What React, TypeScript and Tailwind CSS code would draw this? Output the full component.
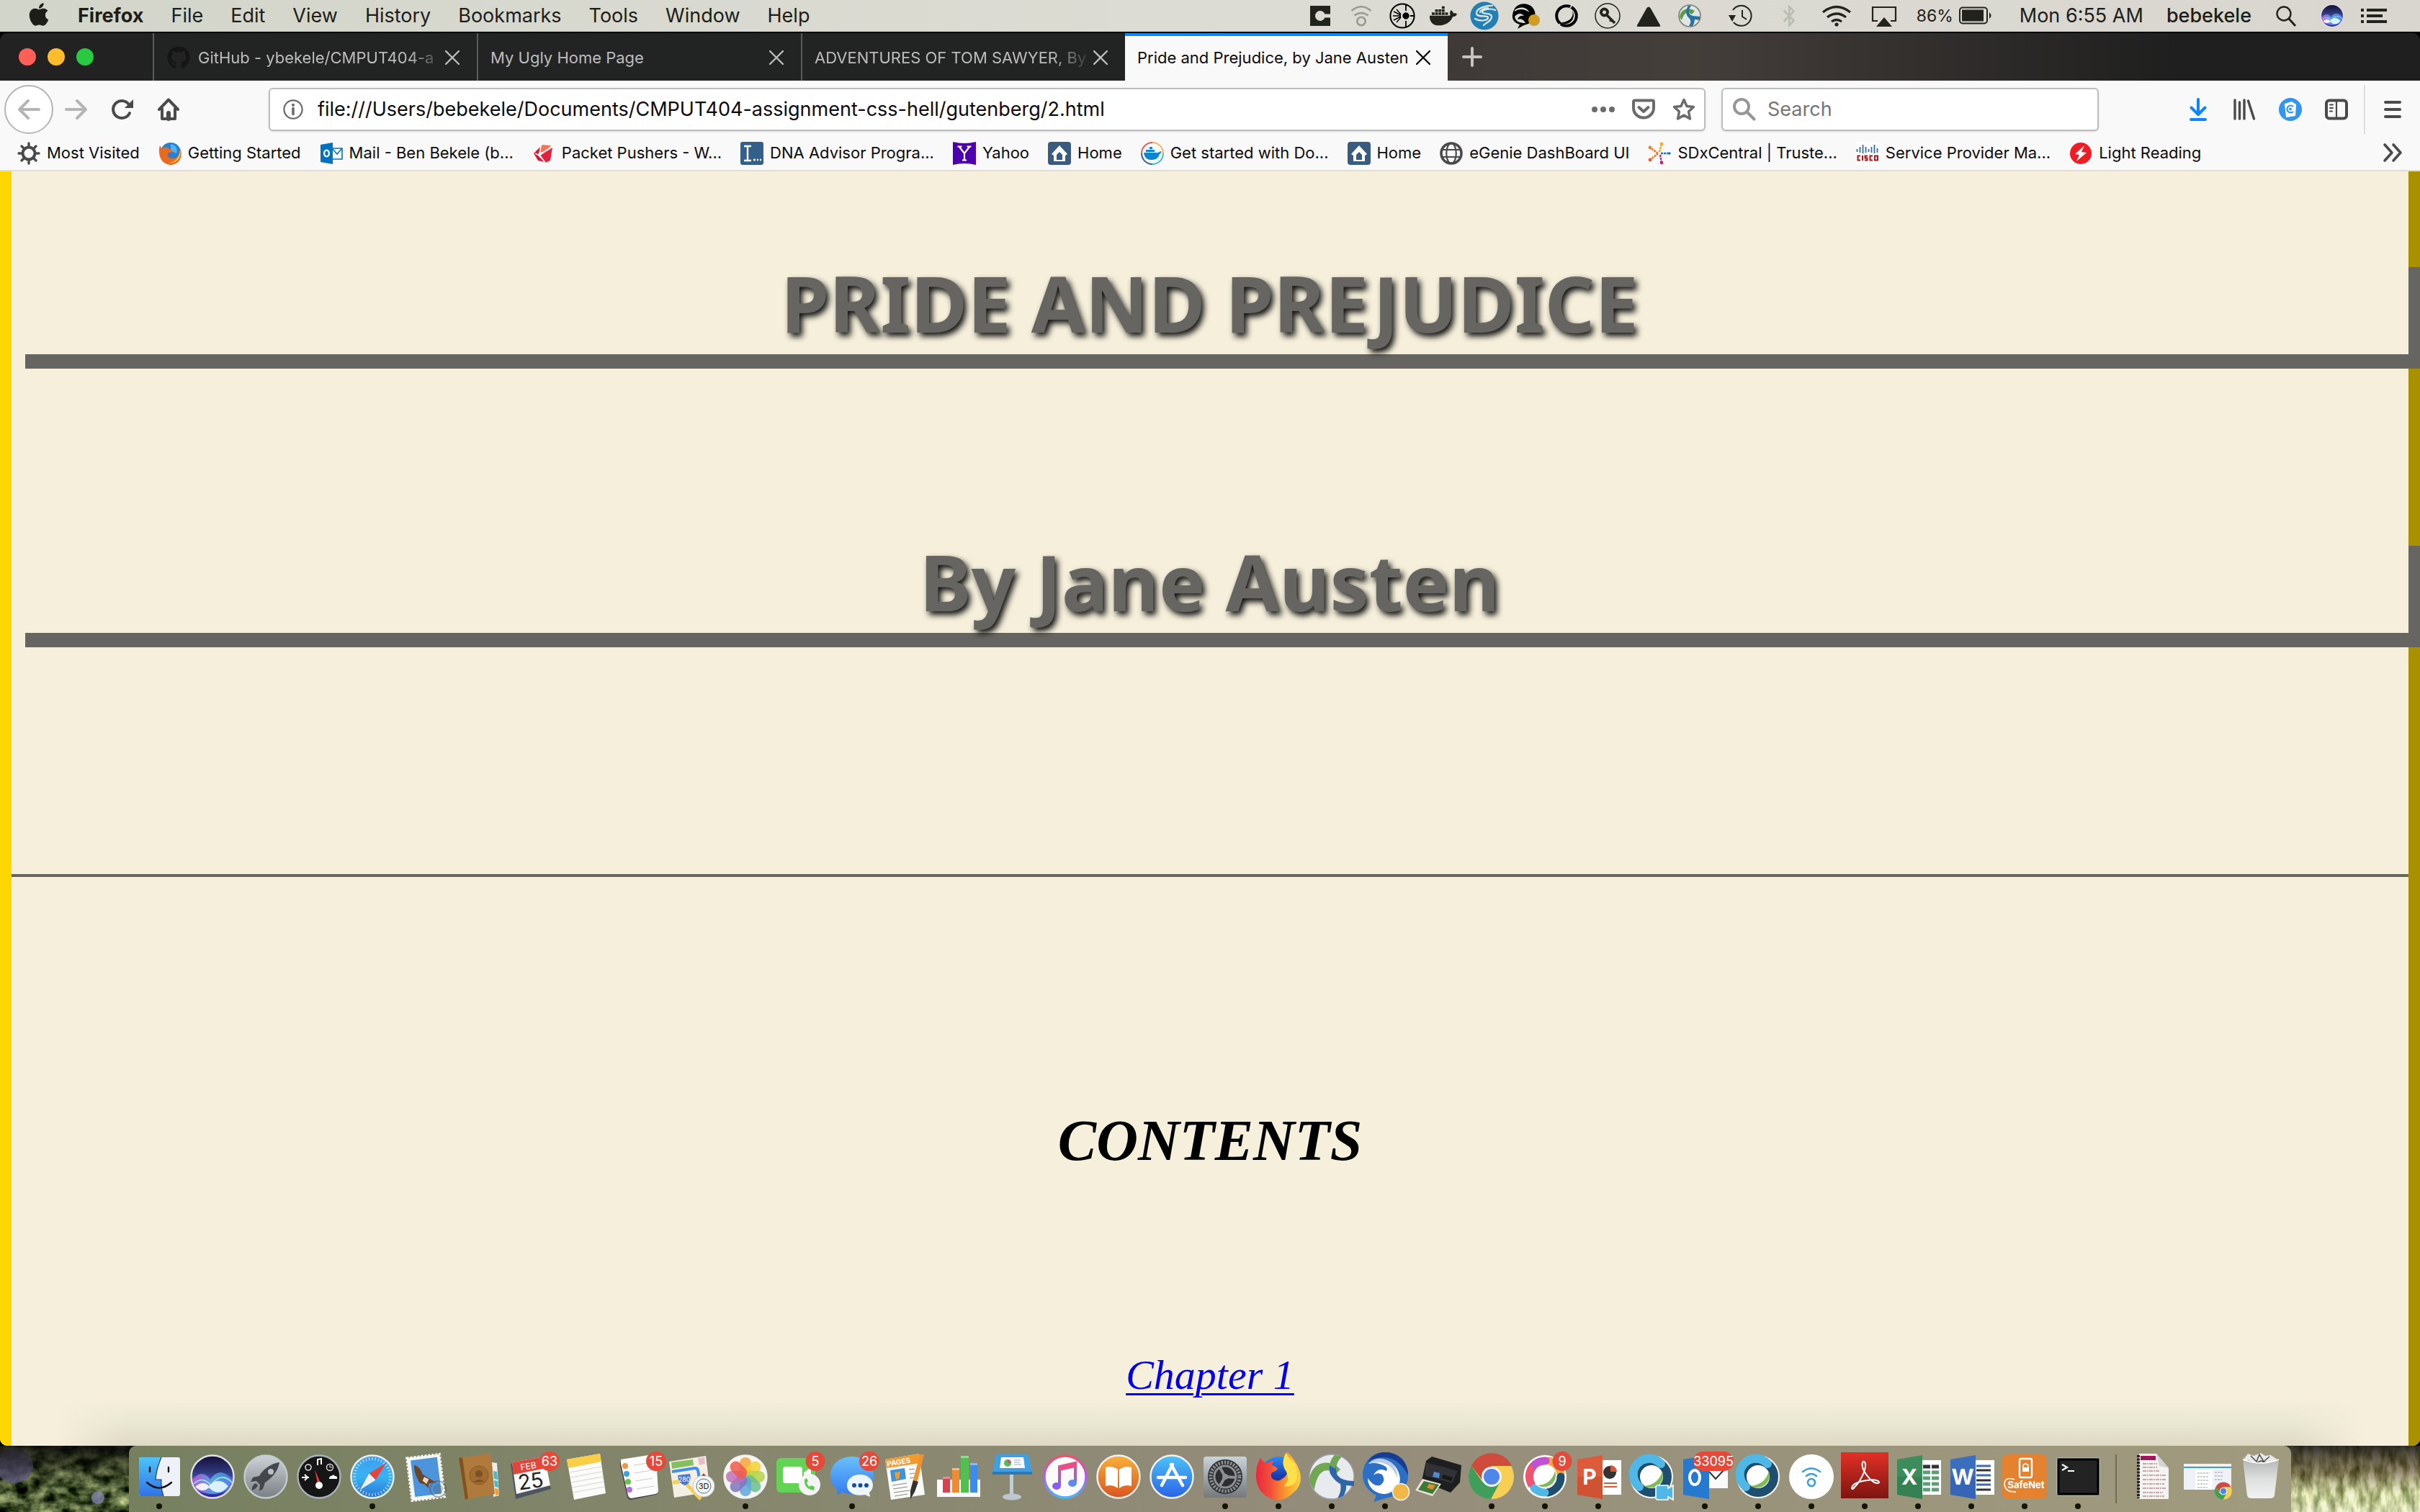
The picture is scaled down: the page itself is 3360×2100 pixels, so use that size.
import React from "react";
import type { ReactNode } from "react";
import { FaApple, FaBluetoothB, FaDocker, FaGithub } from "react-icons/fa";

const ui = "font-['Inter','Liberation_Sans',sans-serif]";

/* ---------- Menu bar ---------- */

const menus = ["File", "Edit", "View", "History", "Bookmarks", "Tools", "Window", "Help"];

function Glyph({ children, size = 40 }: { children: ReactNode; size?: number }) {
  return (
    <svg viewBox="0 0 40 40" width={size} height={size} fill="none" aria-hidden="true">
      {children}
    </svg>
  );
}

const ink = "#22231c";

const statusA: { name: string; art: ReactNode }[] = [
  { name: "Crashplan", art: <path d="M6 6h28v11.500H26.500a7 7 0 1 0 0 5H34V34H6z" fill={ink} /> },
  {
    name: "Hotspot",
    art: (
      <g stroke="#99998f" strokeWidth="2.600">
        <circle cx="20" cy="27.500" r="5.700" />
        <path d="M10.500 19.500q9.500-7 19 0M6.500 13q13.500-11.500 27 0" />
      </g>
    ),
  },
  {
    name: "Network scanner",
    art: (
      <g stroke="#000">
        <circle cx="20" cy="20" r="16.600" strokeWidth="2" />
        <circle cx="25" cy="20" r="4.200" fill="#000" />
        <path d="M25 4v9M25 27v9M31 20h5" strokeWidth="1.800" />
        <path d="M7 20h11M8 14l10 5M8 26l10-5M12 11l6 7M12 29l6-7" strokeWidth="1.400" />
      </g>
    ),
  },
  { name: "Docker", art: <FaDocker x={1} y={1} size={38} color={ink} /> },
  {
    name: "Sync",
    art: (
      <g>
        <circle cx="20" cy="20" r="19.600" fill="#247fb4" />
        <path d="M31 6C22 5 8 10 9 17c1 6 17 1 16 6-1 4-12 5-18 1M35 12c-7-3-18-1-18 3 0 3 14 0 13 7-1 6-9 8-11 11M25 9c-5 0-11 3-11 6" stroke="#e4e8e4" strokeWidth="2.200" strokeLinecap="round" />
      </g>
    ),
  },
  {
    name: "Jabber",
    art: (
      <g>
        <path d="M4 12C8 1 28-1 33 14c2 8-4 14-9 17l-6 2-9 5 3-6C1 29 0 20 4 12z" fill="#000" />
        <path d="M5 12c7-6 18-4 20 3-6-5-15-5-20-1zM5 21c4-5 10-5 13-1-4-1-8 1-9 5 5-2 8 0 11 5-8 0-14-2-15-9z" fill="#d9dad0" />
        <circle cx="32" cy="26" r="8" fill="#cf9c25" />
      </g>
    ),
  },
  {
    name: "Assistant",
    art: (
      <g>
        <circle cx="20" cy="20" r="13.800" stroke="#000" strokeWidth="4" />
        <path d="m25 9 4-6M11 31l-4 6" stroke="#dcdcd3" strokeWidth="1.800" />
        <path d="M28 12c3 9-4 17-15 17 8 7 22-4 15-17z" fill="#000" />
      </g>
    ),
  },
  {
    name: "Keychain",
    art: (
      <g stroke={ink}>
        <circle cx="20" cy="20" r="17" strokeWidth="1.500" />
        <circle cx="15.500" cy="15" r="4.500" strokeWidth="4" />
        <path d="m19 19 11 11M25 25l-1 3" strokeWidth="3.600" />
      </g>
    ),
  },
  { name: "Drive", art: <path d="M17.500 9q2.500-3 5 0L36 33q1 2-1.500 2h-29Q3 35 4 33z" fill={ink} /> },
  {
    name: "AnyConnect",
    art: (
      <g>
        <circle cx="20" cy="20" r="15" fill="#dfe6e4" stroke="#767b74" strokeWidth="1.500" />
        <path d="M6 22C7 11 18 7 27 13l-4 5c-5-5-11-3-14 8z" fill="#5d9b45" />
        <path d="M22 6c-5 6-4 12 2 14l10 1v5l-7-1q0 5-3 9h-5q4-6 1-10c-6-5-6-12-2-18z" fill="#2671a5" />
      </g>
    ),
  },
];

const statusB: { name: string; art: ReactNode }[] = [
  {
    name: "Time Machine",
    art: (
      <g stroke={ink} strokeWidth="2">
        <path d="M8 12a14 14 0 1 1 1 17" />
        <path d="M21 12v9l6 4" />
        <path d="m2 19 5 9 5-9z" fill={ink} stroke="none" />
      </g>
    ),
  },
  { name: "Bluetooth", art: <FaBluetoothB x={4} y={4} size={32} color="#babbb1" /> },
  {
    name: "Wi-Fi",
    art: (
      <g stroke={ink} strokeWidth="3.200">
        <path d="M1 15q19-15 38 0M7 22q13-10 26 0M13 28q7-5 14 0" />
        <circle cx="20" cy="32" r="2.600" fill={ink} stroke="none" />
      </g>
    ),
  },
  {
    name: "AirPlay",
    art: (
      <g>
        <path d="M11 27H4V8h32v19h-7" stroke={ink} strokeWidth="2.200" />
        <path d="m20 22 11 13H9z" fill={ink} />
      </g>
    ),
  },
];

function MenuBar() {
  return (
    <header className="flex h-11 shrink-0 items-center bg-linear-to-r from-[#d2d5ca] via-[#dddcd4] to-[#d8d6cf] text-[27px] text-[#1d1e19]">
      <button aria-label="Apple menu" className="ml-9 mr-9 -mt-1">
        <FaApple size={36} />
      </button>
      <nav className="flex flex-1 items-center gap-[38px]">
        <button className="font-bold">Firefox</button>
        {menus.map((m) => (
          <button key={m}>{m}</button>
        ))}
      </nav>
      <div className="flex items-center">
        {statusA.map((s) => (
          <button key={s.name} aria-label={s.name} className="flex w-[57px] justify-center">
            <Glyph>{s.art}</Glyph>
          </button>
        ))}
      </div>
      <div className="ml-2.5 flex items-center">
        {statusB.map((s) => (
          <button key={s.name} aria-label={s.name} className="flex w-[66px] justify-center">
            <Glyph>{s.art}</Glyph>
          </button>
        ))}
      </div>
      <div className="ml-3 flex items-center gap-2 text-[23px]">
        86%
        <svg width="48" height="26" viewBox="0 0 48 26" fill="none" aria-hidden="true">
          <rect x="1" y="1.500" width="38" height="22" rx="4" stroke={ink} strokeWidth="2" />
          <rect x="4" y="4.500" width="30" height="16" fill={ink} />
          <path d="M42 8q5 4.500 0 9z" fill={ink} />
        </svg>
      </div>
      <button className="ml-9">Mon 6:55 AM</button>
      <button className="ml-8 font-medium">bebekele</button>
      <button aria-label="Spotlight" className="ml-7">
        <Glyph>
          <circle cx="17" cy="17" r="9.500" stroke={ink} strokeWidth="2.400" />
          <path d="m24 24 9 10" stroke={ink} strokeWidth="3" />
        </Glyph>
      </button>
      <button aria-label="Siri" className="ml-6">
        <svg viewBox="-34 -34 68 68" width="40" height="36" aria-hidden="true">
          <SiriArt />
        </svg>
      </button>
      <button aria-label="Notification Center" className="ml-5 mr-[46px]">
        <svg width="36" height="40" viewBox="0 0 36 40" fill={ink} aria-hidden="true">
          <path d="M0 10h4v4H0zM0 18h4v4H0zM0 26h4v4H0zM8 10h28v4H8zM8 18h22v4H8zM8 26h28v4H8z" />
        </svg>
      </button>
    </header>
  );
}

/* ---------- Tab strip ---------- */

const tabs = [
  { title: "GitHub - ybekele/CMPUT404-a", icon: true, active: false, fade: true },
  { title: "My Ugly Home Page", icon: false, active: false, fade: false },
  { title: "ADVENTURES OF TOM SAWYER, By", icon: false, active: false, fade: true },
  { title: "Pride and Prejudice, by Jane Austen", icon: false, active: true, fade: false },
];

function TabStrip() {
  return (
    <div className="shrink-0 bg-black pt-0.5">
      <div className="flex h-[66px] items-stretch rounded-t-[10px] bg-linear-to-r from-[#222] from-0% via-[#443e3b] via-70% to-[#1f1f1f] to-90%">
        <div className="flex w-[212px] shrink-0 items-center gap-4 rounded-tl-[10px] bg-[#222] pl-[26px]">
          <button aria-label="Close window" className="size-6 rounded-full bg-[#ff5f57]" />
          <button aria-label="Minimize window" className="size-6 rounded-full bg-[#ffbd2e]" />
          <button aria-label="Zoom window" className="size-6 rounded-full bg-[#28ca41]" />
        </div>
        {tabs.map((t) => (
          <div
            key={t.title}
            className={
              t.active
                ? "flex w-[448px] items-center border-t-4 border-[#0a84ff] bg-[#f9f9fa] pb-0.5 text-[#0c0c0d]"
                : "flex w-[450px] items-center border-l-2 border-[#5a5a5a] bg-[#222323] pt-0.5 text-[#bdbdbd]"
            }
          >
            {t.icon && <FaGithub size={32} className="ml-[18px] -mr-1.5 shrink-0 text-[#151515]" />}
            <button
              className={
                t.fade
                  ? "ml-[17px] flex-1 mask-r-from-85% text-left text-[22px] whitespace-nowrap"
                  : "ml-[17px] flex-1 text-left text-[22px] whitespace-nowrap"
              }
            >
              {t.title}
            </button>
            <button aria-label={"Close " + t.title} className="mr-6 shrink-0">
              <svg width="20" height="20" viewBox="0 0 20 20" stroke="currentColor" strokeWidth="2.400" strokeLinecap="round" aria-hidden="true">
                <path d="m1 1 18 18M19 1 1 19" />
              </svg>
            </button>
          </div>
        ))}
        <button aria-label="New tab" className="ml-5 text-[#c4c4c4]">
          <svg width="28" height="28" viewBox="0 0 28 28" stroke="currentColor" strokeWidth="4" strokeLinecap="round" aria-hidden="true">
            <path d="M14 2v24M2 14h24" />
          </svg>
        </button>
      </div>
    </div>
  );
}

/* ---------- Navigation toolbar ---------- */

function Icon32({ children, color = "#4a4a4b" }: { children: ReactNode; color?: string }) {
  return (
    <svg width="32" height="32" viewBox="0 0 32 32" fill="none" stroke={color} strokeWidth="4" strokeLinecap="round" strokeLinejoin="round" aria-hidden="true">
      {children}
    </svg>
  );
}

function NavBar() {
  return (
    <div className="flex h-20 shrink-0 items-center bg-[#f9f9fa] text-[27px]">
      <button aria-label="Back" className="ml-1.5 flex size-[68px] shrink-0 items-center justify-center rounded-full border-2 border-[#b5b5b6] bg-white">
        <Icon32 color="#b5b5b6">
          <path d="M30 16H4M15 4 3 16l12 12" />
        </Icon32>
      </button>
      <button aria-label="Forward" className="ml-4">
        <Icon32 color="#b5b5b6">
          <path d="M2 16h26M17 4l12 12-12 12" />
        </Icon32>
      </button>
      <button aria-label="Reload" className="ml-8">
        <Icon32>
          <path d="M26 21a12 12 0 1 1 0-10" />
          <path d="M31 2v12H19z" fill="#4a4a4b" stroke="none" />
        </Icon32>
      </button>
      <button aria-label="Home" className="ml-8">
        <Icon32>
          <path d="M3 16 16 2.500 29 16" />
          <path d="M7 15v14h18V15" />
          <path d="M16 29v-8" strokeWidth="6" />
        </Icon32>
      </button>
      <div className="ml-[123px] flex h-[60px] flex-1 items-center rounded-md border-2 border-[#bdbdbe] bg-white pl-[18px] pr-3 shadow-sm">
        <svg width="28" height="28" viewBox="0 0 28 28" fill="none" aria-hidden="true">
          <circle cx="14" cy="14" r="12.600" stroke="#6b6b6c" strokeWidth="2.200" />
          <path d="M14 12.500v8" stroke="#6b6b6c" strokeWidth="3.600" strokeLinecap="round" />
          <circle cx="14" cy="7.800" r="2.100" fill="#6b6b6c" />
        </svg>
        <input
          aria-label="Address"
          defaultValue="file:///Users/bebekele/Documents/CMPUT404-assignment-css-hell/gutenberg/2.html"
          className="ml-5 min-w-0 flex-1 bg-transparent text-[#0c0c0d] outline-none"
        />
        <div className="flex items-center gap-6">
          <button aria-label="Page actions">
            <svg width="32" height="32" viewBox="0 0 32 32" fill="#6b6b6c" aria-hidden="true">
              <circle cx="4" cy="16" r="4" />
              <circle cx="16" cy="16" r="4" />
              <circle cx="28" cy="16" r="4" />
            </svg>
          </button>
          <button aria-label="Save to Pocket">
            <Icon32 color="#6b6b6c">
              <path d="M4 3.500h24q2 0 2 2V14a14 13.500 0 0 1-28 0V5.500q0-2 2-2z" />
              <path d="m9.500 13 6.500 6 6.500-6" />
            </Icon32>
          </button>
          <button aria-label="Bookmark this page">
            <Icon32 color="#6b6b6c">
              <path d="m16 2.500 4 9 9.500 1-7 6.500 2 10L16 24l-8.500 5 2-10-7-6.500 9.500-1z" strokeWidth="3.400" />
            </Icon32>
          </button>
        </div>
      </div>
      <label className="ml-[22px] flex h-[60px] w-[524px] items-center rounded-md border-2 border-[#bdbdbe] bg-white pl-3.5 shadow-sm">
        <Icon32 color="#969697">
          <circle cx="12" cy="12" r="10" />
          <path d="m19.500 19.500 10 10" />
        </Icon32>
        <input aria-label="Search" placeholder="Search" className="ml-4 min-w-0 flex-1 bg-transparent outline-none placeholder:text-[#757576]" />
      </label>
      <div className="ml-[122px] flex items-center gap-8">
        <button aria-label="Downloads">
          <Icon32 color="#0a84ff">
            <path d="M16 2v20M6.500 13.500 16 23l9.500-9.500M6 30h20" />
          </Icon32>
        </button>
        <button aria-label="Library">
          <Icon32>
            <path d="M3 3v26M9.500 6v23M16 3v26M21.500 4l8 25" strokeWidth="3.400" />
          </Icon32>
        </button>
        <button aria-label="Extension">
          <svg width="32" height="32" viewBox="0 0 32 32" fill="none" aria-hidden="true">
            <circle cx="16" cy="16" r="16" fill="#3295f2" />
            <path d="m8 8 10-3 6 4-1 16-13 2z" fill="#fff" />
            <path d="M20 12a5 5 0 1 0 0 7" stroke="#3295f2" strokeWidth="2.200" />
            <circle cx="16" cy="15.500" r="2" fill="#3295f2" />
          </svg>
        </button>
        <button aria-label="Sidebars">
          <Icon32>
            <rect x="2" y="3.500" width="28" height="25" rx="4" />
            <path d="M16 4v24M7 9.500h4M7 14h4M7 18.500h3" strokeWidth="2.200" />
          </Icon32>
        </button>
      </div>
      <div className="ml-[22px] h-[68px] w-0.5 bg-[#dededf]" />
      <button aria-label="Open menu" className="ml-[22px] mr-[22px]">
        <Icon32>
          <path d="M6 6h20M6 16h20M6 26h20" />
        </Icon32>
      </button>
    </div>
  );
}

/* ---------- Bookmarks ---------- */

const homeArt = (
  <g>
    <rect width="32" height="32" rx="4" fill="#3a5b80" />
    <path d="M5 17 16 5l11 12-3 2v8H8v-8zM12 25h8v-7l-4-4-4 4z" fill="#fff" fillRule="evenodd" />
  </g>
);

const bookmarks: { label: string; art: ReactNode }[] = [
  {
    label: "Most Visited",
    art: (
      <g stroke="#4a4a4b" fill="none">
        <circle cx="16" cy="16" r="8.500" strokeWidth="4" />
        <path d="M16 2v5M16 25v5M2 16h5M25 16h5M6 6l3.500 3.500M22.500 22.500 26 26M26 6l-3.500 3.500M9.500 22.500 6 26" strokeWidth="3.400" strokeLinecap="round" />
      </g>
    ),
  },
  {
    label: "Getting Started",
    art: (
      <g>
        <circle cx="17" cy="15" r="14" fill="#2a7fd0" />
        <path d="M17 3c8 1 10 8 8 13l-8-4z" fill="#4db5ee" />
        <path d="M2 5c-2 5-3 25 14 27 16 0 18-16 14-23 1 9-3 13-9 14-7 1-10-4-7-8l6-1c-1-4-5-3-7-6-4-1-6 0-8 2z" fill="#ea6a1f" />
        <path d="M30 9c3 14-6 22-16 20 10 0 16-9 16-20z" fill="#fbc63f" />
      </g>
    ),
  },
  {
    label: "Mail - Ben Bekele (b...",
    art: (
      <g>
        <path d="M17 9h14v15H17z" fill="#fff" stroke="#0072c6" strokeWidth="1.600" />
        <path d="m18 10 6 7 7-8" stroke="#0072c6" strokeWidth="1.600" fill="none" />
        <path d="m1 4 17-3v30L1 28z" fill="#0072c6" />
        <ellipse cx="9.500" cy="16" rx="3.400" ry="4.400" fill="none" stroke="#fff" strokeWidth="2.400" />
      </g>
    ),
  },
  {
    label: "Packet Pushers - W...",
    art: (
      <g>
        <path d="m14 4 12 1-8 9-11 1z" fill="#f47458" />
        <path d="m2 16 9-9-3 12 9 9-9-2z" fill="#d8173b" />
        <path d="m28 8-3 18-7 3-7-10 9-6z" fill="#e0213f" />
        <path d="m12 5-2 13 8 11M9 18l18-11M4 16l6 3" stroke="#fff" strokeWidth="1.400" fill="none" />
      </g>
    ),
  },
  {
    label: "DNA Advisor Progra...",
    art: (
      <g>
        <rect width="32" height="32" rx="3" fill="#33608a" />
        <path d="M5 6h10M10 6v19M5 26h10M18 25h3M23 25h2M27 25h2" stroke="#fff" strokeWidth="2.400" />
      </g>
    ),
  },
  {
    label: "Yahoo",
    art: (
      <g>
        <path d="M0 0q16 4 32 0v32q-16-4-32 0z" fill="#4d00ae" />
        <path d="m9 7 7 9v9M23 7l-7 9M6.500 6.500h6M19.500 6.500h6M13 25.500h6" stroke="#fff" strokeWidth="2.200" fill="none" />
      </g>
    ),
  },
  { label: "Home", art: homeArt },
  {
    label: "Get started with Do...",
    art: (
      <g fill="none" strokeWidth="2">
        <path d="M16 1a15 15 0 0 1 15 15" stroke="#fbb254" />
        <path d="M31 16a15 15 0 0 1-15 15" stroke="#35c4c9" />
        <path d="M16 31A15 15 0 0 1 1 16" stroke="#3a5c9a" />
        <path d="M1 16A15 15 0 0 1 16 1" stroke="#f2545b" />
        <path d="M4 15h20l3-2 2 1-3 3c-2 7-7 8-12 8S5 22 4 15zM7 11h12v3H7zM12 7h4v3h-4z" fill="#0b86d0" />
      </g>
    ),
  },
  { label: "Home", art: homeArt },
  {
    label: "eGenie DashBoard UI",
    art: (
      <g fill="none" stroke="#4a4a4b" strokeWidth="2.200">
        <circle cx="16" cy="16" r="14" strokeWidth="3.600" />
        <ellipse cx="16" cy="16" rx="6.800" ry="14" />
        <path d="M4 11h24M4 21h24" />
      </g>
    ),
  },
  {
    label: "SDxCentral | Truste...",
    art: (
      <g strokeWidth="2.600" strokeDasharray="3 1" fill="none">
        <path d="m14 16-11-8M14 16 3 25" stroke="#f1762b" />
        <path d="m16 14 3-11" stroke="#f6a81c" />
        <path d="m17 18 2 11" stroke="#cf2186" />
        <path d="M18 16h12" stroke="#1679bd" />
        <g stroke="none">
          <circle cx="3" cy="8" r="2.400" fill="#f58220" />
          <circle cx="3" cy="25" r="2.400" fill="#f0592b" />
          <circle cx="19" cy="3" r="2.400" fill="#f9ad19" />
          <circle cx="19" cy="29" r="2.400" fill="#cf2186" />
          <circle cx="30" cy="16" r="1.800" fill="#1679bd" />
        </g>
      </g>
    ),
  },
  {
    label: "Service Provider Ma...",
    art: (
      <g>
        <rect width="32" height="32" fill="#fff" />
        <path d="M1.500 10v4M5.500 7v8M9.500 4v12M13.500 7v8M17.500 10v4M21.500 7v8M25.500 4v12M29.500 9v6" stroke="#3b6e8c" strokeWidth="1.800" />
        <path d="M6 19.500H2.500v6H6M9 19v7M16 19.500h-3.500v3h3v3H12M23 19.500h-3.500v6H23M26 19.500h4v6h-4z" stroke="#a3171b" strokeWidth="2" fill="none" />
      </g>
    ),
  },
  {
    label: "Light Reading",
    art: (
      <g>
        <circle cx="16" cy="16" r="15" fill="#ee1c25" />
        <path d="m21 5-13 12 6 1-4 9 14-12-7-1z" fill="#fff" />
      </g>
    ),
  },
];

function BookmarksBar() {
  return (
    <div className="flex h-[46px] shrink-0 items-start gap-[26px] border-b-2 border-[#dddddd] bg-[#f9f9fa] pl-6 pt-1 text-[22px] text-[#0c0c0d]">
      {bookmarks.map((b, i) => (
        <a key={i} href="#" className="flex shrink-0 items-center gap-[9px] whitespace-nowrap">
          <svg width="32" height="32" viewBox="0 0 32 32" aria-hidden="true">
            {b.art}
          </svg>
          {b.label}
        </a>
      ))}
      <button aria-label="Show more bookmarks" className="ml-auto mr-6">
        <svg width="28" height="32" viewBox="0 0 28 32" fill="none" stroke="#4a4a4b" strokeWidth="3.600" strokeLinecap="round" strokeLinejoin="round" aria-hidden="true">
          <path d="m3 5 10 11L3 27M15 5l10 11-10 11" />
        </svg>
      </button>
    </div>
  );
}

/* ---------- Page ---------- */

const heading =
  "ml-[19px] -mr-4 border-r-16 border-b-20 border-[#666561] pr-5 pb-[21px] text-center font-['Noto_Sans',sans-serif] text-[108px] leading-[100px] font-bold text-[#666561] [text-shadow:4px_5px_8px_#111]";

function Page() {
  return (
    <main className="relative min-h-0 flex-1 overflow-hidden rounded-b-[10px] bg-[#f5efdb]">
      <div className="h-full border-x-16 border-l-[#ffd700] border-r-[#a89000] pt-[133px]">
        <h1 className={heading}>PRIDE AND PREJUDICE</h1>
        <h2 className={"mt-[246px] " + heading}>By Jane Austen</h2>
        <hr className="mt-[315px] border-t-4 border-[#66655f]" />
        <h3 className="mt-[318px] text-center font-['Liberation_Serif',serif] text-[80px] leading-[96px] font-bold text-black italic">CONTENTS</h3>
        <p className="mt-[242px] text-center font-['Liberation_Serif',serif] text-[58px] leading-[72px] italic">
          <a href="#chap1" className="text-[#0000ee] underline decoration-3 underline-offset-6">
            Chapter 1
          </a>
        </p>
      </div>
      <div className="pointer-events-none absolute inset-x-20 bottom-0 h-16 mask-x-from-97% bg-linear-to-t from-[#cfc9b4]/60 via-[#d8dcc4]/40 to-transparent" />
    </main>
  );
}

/* ---------- Dock ---------- */

function SiriArt() {
  return (
    <g>
      <defs>
        <linearGradient id="siri" x1="0" y1="0" x2="0" y2="1">
          <stop offset="0" stopColor="#160d38" />
          <stop offset=".4" stopColor="#2f3a7c" />
          <stop offset=".65" stopColor="#6a5cf0" />
          <stop offset="1" stopColor="#2a1c9a" />
        </linearGradient>
        <linearGradient id="wave" x1="0" y1="0" x2="1" y2="0">
          <stop offset="0" stopColor="#e05ad8" />
          <stop offset=".5" stopColor="#5ac8e8" />
          <stop offset="1" stopColor="#4a8cf5" />
        </linearGradient>
      </defs>
      <circle r="29.500" fill="url(#siri)" stroke="#dfe3e6" strokeWidth="2.400" />
      <path d="M-28 4Q-14-12-3 4 10-16 28 4L22 18Q0 30-22 18z" fill="url(#wave)" opacity=".7" />
      <path d="M-26 10Q-14-2-2 12 12-8 27 8" stroke="#9fe8f5" strokeWidth="1.600" fill="none" />
      <path d="M-24 14Q-13 4-4 14-13 24-24 14z" fill="#fff" opacity=".9" />
      <path d="M-6 14Q7-2 22 13 8 30-6 14z" fill="#e8fbff" opacity=".9" />
    </g>
  );
}

function Badge({ n, x = 17, w = 28 }: { n: string; x?: number; w?: number }) {
  return (
    <g stroke="none">
      <rect x={x - w / 2} y="-35" width={w} height="27" rx="13.500" fill="#e5493a" />
      <text x={x} y="-15" textAnchor="middle" fontSize="18" fill="#fff">
        {n}
      </text>
    </g>
  );
}

function Office({ letter, color, dark, children }: { letter: string; color: string; dark: string; children: ReactNode }) {
  return (
    <g>
      <rect x="2" y="-23" width="30" height="48" fill="#fff" />
      {children}
      <path d="M-29-24 6-30V31L-29 25z" fill={color} />
      <path d="M-29 0 6 0V31L-29 25z" fill={dark} opacity=".25" />
      <text x="-12" y="11" textAnchor="middle" fontSize="30" fontWeight="700" fill="#fff">
        {letter}
      </text>
    </g>
  );
}

function Webex() {
  return (
    <g fill="none">
      <circle r="30" fill="#fff" />
      <circle r="22" stroke="#1f4f6e" strokeWidth="12" />
      <path d="M13-18A22 22 0 1 0-17 14" stroke="#4fb8e6" strokeWidth="12" strokeLinecap="round" />
      <path d="M15-8C20 8 4 21-11 13 3 12 12 4 15-8z" fill="#7fbb58" />
    </g>
  );
}

function Chrome() {
  return (
    <g>
      <circle r="31" fill="#f7cf53" />
      <path d="M-28-15A31 31 0 0 1 28-15H0L-12 6z" fill="#cf4b3b" />
      <path d="M-28-15A31 31 0 0 0-1 31L12 7 0 14-13 7z" fill="#3f9e5a" />
      <circle r="14" fill="#f3f3f3" />
      <circle r="11" fill="#4f86ec" />
    </g>
  );
}

function Ring({ fill, edge = "#f2f2f2" }: { fill: string; edge?: string }) {
  return <circle r="29.500" fill={fill} stroke={edge} strokeWidth="2.400" />;
}

const petals = ["#f6a33a", "#f2d433", "#b4d24a", "#69c08a", "#5fa6dc", "#7d76c0", "#c070b4", "#ee5a4c"];
const ticks = Array.from({ length: 36 }, (_, i) => i * 10);

type App = { name: string; art: ReactNode; running?: boolean };

const apps: App[] = [
  {
    name: "Finder",
    running: true,
    art: (
      <g>
        <rect x="-28" y="-27" width="57" height="54" rx="3" fill="#eef2f8" />
        <path d="M-25-27H3Q-4-10-5 4H3Q2 16 6 27H-25q-3 0-3-3V-24q0-3 3-3z" fill="url(#finder)" />
        <path d="M3-27Q-4-10-5 4H3Q2 16 6 27" stroke="#1d3f6e" strokeWidth="1.200" fill="none" />
        <path d="M-13-13v6M13-13v6M-17 8Q0 23 17 8" stroke="#111" strokeWidth="2.400" fill="none" strokeLinecap="round" />
      </g>
    ),
  },
  { name: "Siri", art: <SiriArt /> },
  {
    name: "Launchpad",
    art: (
      <g>
        <Ring fill="url(#steel)" edge="#c3cbd1" />
        <path d="M19-20C6-18-4-10-9-1l-9 2-3 6 8-1 5 5-1 9 5-3 3-9C8 2 17-7 19-20z" fill="#44484c" />
        <path d="M-14 9q-6 3-5 10 6-2 8-7z" fill="#44484c" />
        <circle cx="7" cy="-7" r="4" fill="#b9c0c5" />
      </g>
    ),
  },
  {
    name: "Dashboard",
    art: (
      <g>
        <Ring fill="#161616" edge="#a7b2b8" />
        <path d="M-6-10-1.500 12h5z" fill="#ef3b2e" />
        <circle cx="0" cy="12" r="5" fill="#fff" />
        <path d="M-2-16v-8l5-1v8M-24 1h10M-20-3l4 4-4 4" stroke="#fff" strokeWidth="2" fill="none" />
        <circle cx="-15" cy="-13" r="4" fill="none" stroke="#ddd" strokeWidth="1.600" />
        <circle cx="15" cy="-13" r="4.500" fill="none" stroke="#ddd" strokeWidth="1.400" />
        <path d="M15-16v3h3" stroke="#ddd" strokeWidth="1" fill="none" />
        <path d="M14 3h11q1-4-3-4-2-3-5 0-3 0-3 4z" fill="#fff" />
      </g>
    ),
  },
  {
    name: "Safari",
    running: true,
    art: (
      <g>
        <Ring fill="url(#safari)" edge="#eef1f3" />
        {ticks.map((a) => (
          <path key={a} d="M0-27v4" stroke="#d8efff" strokeWidth="1" transform={`rotate(${a})`} />
        ))}
        <path d="M19-19-4.500-4.500 4.500 4.500z" fill="#e8433a" />
        <path d="M-17 18-4.500-4.500 4.500 4.500z" fill="#f1f1f1" />
      </g>
    ),
  },
  {
    name: "Mail",
    art: (
      <g transform="rotate(-7)">
        <rect x="-23" y="-29" width="46" height="60" fill="#f5f5f2" stroke="#f5f5f2" strokeWidth="3" strokeDasharray="3 2" />
        <rect x="-18" y="-25" width="37" height="51" fill="#4c95dd" />
        <path d="M-14-18q8 3 10 14l6 5 12 9q-6-1-11 0l-1 6-5-6-6-2Q-16-6-14-18z" fill="#6b4526" />
        <path d="m-2 0 6 4-4 6-5-5z" fill="#e7d8b8" />
        <circle cx="15" cy="19" r="11" fill="none" stroke="#555" strokeWidth="2" opacity=".5" />
        <circle cx="15" cy="19" r="7" fill="#555" opacity=".3" />
      </g>
    ),
  },
  {
    name: "Contacts",
    art: (
      <g>
        <path d="m18-20 7 1 3 45-8 2z" fill="#eee" />
        <path d="m20-8 5 1 1 11-5-1zM21 5l5 1 1 9-5-1z" fill="#4cb6c9" />
        <path d="m22 16 5 1 1 8-5 1z" fill="#e9a13a" />
        <path d="m-28-26 41-6q4 0 4 4l5 52-42 8z" fill="#b07a3c" />
        <path d="m-28-26 5-1 8 57-4 2z" fill="#7e5424" />
        <circle cx="0" cy="-2" r="13" fill="#a06c32" stroke="#8a5a26" />
        <path d="M-8 8q8-8 16-1" fill="#7c5225" />
        <circle cy="-4" r="5" fill="#7c5225" />
      </g>
    ),
  },
  {
    name: "Calendar",
    art: (
      <g>
        <path d="m-30-18 46-9 10 44-49 14z" fill="#4c5560" />
        <path d="m-28-20 45-8 8 40-47 12z" fill="#fafafa" />
        <path d="m-28-20 45-8 3 16-46 9z" fill="#e0463b" />
        <text x="-3" y="-11" transform="rotate(-9)" textAnchor="middle" fontSize="12" fill="#fff">FEB</text>
        <text x="-3" y="16" transform="rotate(-8)" textAnchor="middle" fontSize="29" fill="#222">25</text>
        <Badge n="63" x={24} w={28} />
      </g>
    ),
  },
  {
    name: "Notes",
    art: (
      <g>
        <path d="m-26-24 46-8 8 55-44 9z" fill="#fbfbf9" />
        <path d="m-26-24 46-8 2 11-46 9z" fill="#f8cf46" />
        <path d="m-22-6 44-8M-21 1l44-8M-20 8l44-8M-19 15l44-8M-18 22l44-8" stroke="#d5d5d0" />
      </g>
    ),
  },
  {
    name: "Reminders",
    art: (
      <g>
        <path d="m-25-22 45-8q3 0 4 4l3 46q0 4-4 5l-34 7q-4 0-5-4l-10-44q0-5 1-6z" fill="#3c3e42" />
        <path d="m-25-24 45-7q3 0 4 4l3 46q0 4-4 5l-33 6q-4 0-5-4l-10-44q0-4 0-6z" fill="#fcfcfc" />
        <circle cx="-19" cy="-15" r="4" fill="#f59338" />
        <circle cx="-17" cy="-4" r="4" fill="#3e9fe8" />
        <circle cx="-15" cy="7" r="4" fill="#63c64b" />
        <circle cx="-13" cy="18" r="4" fill="#b56fd9" />
        <path d="m-7-16 20-3M-6-5l24-4M-5 6l24-4M-3 17l24-4" stroke="#ccc" />
        <Badge n="15" x={24} w={28} />
      </g>
    ),
  },
  {
    name: "Maps",
    art: (
      <g>
        <path d="m-32-21 51-8 6 50-50 8z" fill="#f3efe4" />
        <path d="m-29-20 30-4 1 8-30 5z" fill="#84bf5f" />
        <path d="m8-26 9-1 1 9-8 2z" fill="#e9bccb" />
        <path d="m-28-7 32-5q3 0 4 3l5 28" stroke="#3f8ef0" strokeWidth="4" fill="none" />
        <path d="m-27 8 15-2 24 25" stroke="#f6cf4e" strokeWidth="5" fill="none" />
        <path d="m-20-2 17-2q3 12-7 16-10-3-10-14z" fill="#4a79d1" />
        <text x="-11" y="7" textAnchor="middle" fontSize="9" fill="#fff">280</text>
        <circle cx="16" cy="13" r="15" fill="#f4f5f6" stroke="#ccc" />
        <circle cx="16" cy="13" r="10" fill="none" stroke="#54728e" />
        <path d="m13-1 3-4 3 4z" fill="#d33" />
        <text x="16" y="17" textAnchor="middle" fontSize="11" fill="#222">3D</text>
      </g>
    ),
  },
  {
    name: "Photos",
    running: true,
    art: (
      <g>
        <Ring fill="#f5f5f4" />
        {petals.map((c, i) => (
          <rect key={c} x="-8" y="-27" width="16" height="27" rx="8" fill={c} opacity=".85" transform={`rotate(${i * 45})`} />
        ))}
      </g>
    ),
  },
  {
    name: "FaceTime",
    art: (
      <g>
        <rect x="-31" y="-26" width="54" height="48" rx="6" fill="#62d354" />
        <rect x="-22" y="-14" width="27" height="23" rx="4" fill="#fff" />
        <path d="m7-6 10-7v17L7-1z" fill="#fff" />
        <circle cx="15" cy="11" r="15" fill="#f3f4f3" />
        <path d="M8 4q-1 13 13 15l1-5-5-2-2 2q-3-2-4-6l2-2-2-4z" fill="#5acb4a" />
        <Badge n="5" x={23} w={27} />
      </g>
    ),
  },
  {
    name: "Messages",
    running: true,
    art: (
      <g>
        <path d="M0-28c17 0 30 11 30 26S17 24 0 24c-6 0-10-1-14-3l-7 5q2-5-1-10c-5-4-8-10-8-18 0-15 13-26 30-26z" fill="url(#msg)" />
        <path d="M11-3c10 0 18 6 18 15 0 5-3 8-5 10l1 6-7-3C4 28-7 22-7 12-7 3 1-3 11-3z" fill="#eef6fd" />
        <g fill="#1c4c9a">
          <circle cx="3" cy="12" r="3" />
          <circle cx="11.500" cy="12" r="3" />
          <circle cx="20" cy="12" r="3" />
        </g>
        <Badge n="26" x={24} w={28} />
      </g>
    ),
  },
  {
    name: "Pages",
    art: (
      <g>
        <path d="m-28-24 47-8 8 57-47 7z" fill="#fafaf8" />
        <path d="m-28-24 47-8 2 13-47 7z" fill="#f29a2e" />
        <text x="-6" y="-18" transform="rotate(-9)" textAnchor="middle" fontSize="10" fontWeight="700" fill="#fff">PAGES</text>
        <path d="m-21-9 20-3 2 15-20 4z" fill="#3f93da" />
        <path d="m-15-6 8-1-2 10-4 1z" fill="#f59b22" />
        <path d="m-18 12 20-3M-17 17l20-3M-16 22l22-3M-15 27l18-3M5-10l8-1M6-4l7-1M6 2l7-1" stroke="#888" />
        <path d="M20-31h6L14 18l-6 11 0-13z" fill="#ef9230" />
        <path d="m11 5 7 2-5 14-6 10 0-12z" fill="#333" />
      </g>
    ),
  },
  {
    name: "Numbers",
    art: (
      <g>
        <path d="M-30 4h60v24h-60z" fill="#fbfbfb" />
        <rect x="-22" y="0" width="10" height="22" fill="#d9414d" />
        <rect x="-9" y="-12" width="10" height="34" fill="#ee8a34" />
        <rect x="3" y="-29" width="11" height="51" fill="#53bf4e" />
        <rect x="16" y="-19" width="10" height="41" fill="#3c8cf0" />
        <path d="M-22 0h10v3h-10zM-9-12H1v3H-9zM3-29h11v3H3zM16-19h10v3H16z" fill="#fff" opacity=".4" />
      </g>
    ),
  },
  {
    name: "Keynote",
    art: (
      <g>
        <path d="M-3-8h5v36h-5z" fill="#c2ccd3" />
        <ellipse cy="28" rx="13" ry="4.500" fill="#bcc6cd" />
        <path d="M-22-31h45l5 25h-55z" fill="#3f9fe4" />
        <path d="M-27-7h55v4h-55z" fill="#2879b9" />
        <path d="M-15-27h31l2 15h-35z" fill="#f7fbff" />
        <circle cx="-6" cy="-19" r="5" fill="#58b957" />
        <path d="M-6-19v-5a5 5 0 0 1 5 5z" fill="#e3477c" />
        <path d="M3-23h9M3-20h8M3-17h10" stroke="#aab" />
      </g>
    ),
  },
  {
    name: "iTunes",
    art: (
      <g>
        <circle r="29" fill="#fafafb" stroke="url(#rainbow)" strokeWidth="3.400" />
        <path d="M-8 12V-14L14-19V8" stroke="url(#note)" strokeWidth="4" fill="none" />
        <path d="M-8-14 14-19v6L-8-8z" fill="#ea4e83" />
        <ellipse cx="-12" cy="13" rx="6" ry="5" fill="#8a5cf0" />
        <ellipse cx="10" cy="9" rx="6" ry="5" fill="#5a8cf0" />
      </g>
    ),
  },
  {
    name: "iBooks",
    art: (
      <g>
        <Ring fill="url(#books)" />
        <path d="M-1-10q-8-6-17-3v26q9-3 17 3zM1-10q8-6 17-3v26q-9-3-17 3z" fill="#fff" />
      </g>
    ),
  },
  {
    name: "App Store",
    art: (
      <g>
        <Ring fill="url(#store)" />
        <path d="M1-17-14 12M-1-17l16 29M-19 1h38" stroke="#fff" strokeWidth="4.400" strokeLinecap="round" />
      </g>
    ),
  },
  {
    name: "System Preferences",
    running: true,
    art: (
      <g>
        <rect x="-30" y="-28" width="60" height="57" rx="4" fill="url(#pref)" />
        <circle r="24" fill="#2b2d2f" />
        <circle r="20" fill="none" stroke="#8b8f92" strokeWidth="5" strokeDasharray="2.500 1.700" />
        <circle r="15" fill="#2b2d2f" stroke="#8b8f92" strokeWidth="3" />
        <path d="M0 0 14 1M0 0-8-14M0 0-8 14" stroke="#8b8f92" strokeWidth="4" />
        <circle r="4" fill="#8b8f92" />
      </g>
    ),
  },
  {
    name: "Firefox",
    running: true,
    art: (
      <g>
        <circle cx="1" cy="-2" r="26" fill="url(#fxblue)" />
        <path d="M-25-26q4 6 8 7 5-3 11-3-3 3-3 6 5 1 8 5-3 4-8 5-3 5 1 9 7 5 13 0 12-7 6-20-3-10 2-17 8 8 13 18 12 24-5 38-14 14-30 9Q-32 22-31-4q0-12 6-22z" fill="url(#fxfire)" />
        <path d="M11-34q-9 15 0 27 5 12-3 20 18 2 18-15 0-18-9-22-5-4-6-10z" fill="#ffe04a" />
      </g>
    ),
  },
  {
    name: "AnyConnect",
    running: true,
    art: (
      <g>
        <circle r="31" fill="#e8ebee" stroke="#9aa1a8" strokeWidth="1.400" />
        <path d="M-31 2C-26-22-2-26 12-10L5-3C-6-14-20-10-24 18Q-30 12-31 2z" fill="#71a652" />
        <path d="M4-30Q-6-16-2-4 4 6 12 10q2 10-4 20l8-3q5-8 4-15l11 1v-7Q14 6 8-2 2-14 13-28z" fill="#2e64a8" />
        <path d="M4-30 14-28Q6-20 5-11L-3-16Q-2-24 4-30z" fill="#71a652" />
      </g>
    ),
  },
  {
    name: "Jabber",
    running: true,
    art: (
      <g>
        <path d="M0-34c20 0 32 14 32 32 0 17-13 29-28 31l-20 6 4-9C-24 20-31 10-31-4-30-22-17-34 0-34z" fill="#2c6fc7" />
        <path d="M0-34c20 0 32 14 32 32Q20-26-2-27q-14 0-22 7 8-14 24-14z" fill="#173d92" />
        <path d="M-23-18C-10-28 14-26 20-2 24 12 12 22 0 24-14 24-24 14-24 2q8 12 17 10 9-6 3-15-7-4-12 1Q-10-14 2-8 6-14-8-18q-8-2-15 0z" fill="#fff" />
        <path d="M-23-18Q-14-28 0-24 18-18 17 2 10-18-8-20q-8 0-15 2z" fill="#b8cdec" />
        <circle cx="22" cy="21" r="11.500" fill="#f2b846" stroke="#e9f1fa" strokeWidth="1.600" />
      </g>
    ),
  },
  {
    name: "Printer",
    art: (
      <g>
        <path d="m-17-22 8-6 41 12-2 24-13 14-40-16z" fill="#1d1e20" />
        <path d="m-17-20 44 12-8 17-38-11z" fill="#303236" />
        <path d="M-6-7 2-5 1 2-8 0z" fill="#4e8bd6" />
        <path d="m6-3 14 4-2 5-13-4z" fill="#17181a" />
        <path d="m-22 3 26 7-12 17-24-8z" fill="#e9e4d6" />
        <path d="m-20 6 21 5-9 13-20-6z" fill="#3c7a38" />
        <path d="m-13 10 9 2-4 6-8-3z" fill="#e58a30" />
      </g>
    ),
  },
  { name: "Chrome", running: true, art: <Chrome /> },
  {
    name: "Webex Teams",
    running: true,
    art: (
      <g fill="none" strokeWidth="11" strokeLinecap="round">
        <circle r="30" fill="#fff" stroke="none" />
        <path d="M6-22A22 22 0 0 1 22-4" stroke="#f3a83b" />
        <path d="M22 0A22 22 0 0 1 4 22" stroke="#1f4f6e" />
        <path d="M-19 10A22 22 0 0 1-16-15" stroke="#ef5470" />
        <path d="M0 22A22 22 0 0 1-15 16" stroke="#4fb8e6" />
        <path d="M-14-17A22 22 0 0 1 1-22" stroke="#c252d4" />
        <path d="M14-8C19 8 4 19-10 12 3 11 11 4 14-8z" fill="#7fbb58" stroke="none" />
        <Badge n="9" x={24} w={27} />
      </g>
    ),
  },
  {
    name: "PowerPoint",
    running: true,
    art: (
      <Office letter="P" color="#dd5a3a" dark="#a83a1c">
        <circle cx="16" cy="-6" r="9" fill="#333" />
        <path d="M17-7v-9a9 9 0 0 1 9 9z" fill="#d3593b" />
        <path d="M8 9h18M8 14h18" stroke="#d3593b" strokeWidth="2" />
      </Office>
    ),
  },
  {
    name: "Webex Meetings",
    art: (
      <g>
        <Webex />
        <path d="M9 12h14v4l7-4v20l-7-4v4H9q-3 0-3-3V15q0-3 3-3z" fill="#4fb8e6" stroke="#fff" strokeWidth="1.600" />
      </g>
    ),
  },
  {
    name: "Outlook",
    running: true,
    art: (
      <g>
        <rect x="0" y="-16" width="32" height="32" fill="#fafafa" />
        <path d="m6-7 9 10 13-14" stroke="#333" strokeWidth="2" fill="none" />
        <path d="M-30-24 6-30V31L-30 25z" fill="#2579cf" />
        <ellipse cx="-14" cy="1" rx="7" ry="10" fill="none" stroke="#fff" strokeWidth="4" />
        <Badge n="33095" x={12} w={56} />
      </g>
    ),
  },
  { name: "Webex", running: true, art: <Webex /> },
  {
    name: "Wireless",
    running: true,
    art: (
      <g>
        <circle r="31" fill="#fff" />
        <g stroke="#3a9ed8" strokeWidth="2.600" fill="none" strokeLinecap="round">
          <circle cy="8" r="5" />
          <path d="M-7-1q7-6 14 0M-12-7q12-9 24 0" />
        </g>
      </g>
    ),
  },
  {
    name: "Acrobat",
    running: true,
    art: (
      <g>
        <rect x="-33" y="-34" width="66" height="64" fill="url(#acro)" />
        <path d="M-16 16C-8 10 2-8 1-18-2-26-6-18-1-8 6 4 16 12 20 8 20 2-2 4-14 10-20 15-18 20-14 15" stroke="#fff" strokeWidth="2" fill="none" />
      </g>
    ),
  },
  {
    name: "Excel",
    running: true,
    art: (
      <Office letter="X" color="#3d8d5c" dark="#1b5e38">
        <path d="M7-14h22" stroke="#333" strokeWidth="5" />
        <path d="M7-6h22M7 2h22M7 10h22M7 18h22" stroke="#5c9e76" strokeWidth="5" />
        <path d="M18-18v40" stroke="#fff" strokeWidth="2" />
      </Office>
    ),
  },
  {
    name: "Word",
    running: true,
    art: (
      <Office letter="W" color="#3c6ec0" dark="#234b92">
        <path d="M7-15h20M7-2h20M7 11h20" stroke="#4068b8" strokeWidth="3" />
        <path d="M7-9h20M7 5h20M7 18h20" stroke="#333" strokeWidth="3" />
      </Office>
    ),
  },
  {
    name: "SafeNet",
    running: true,
    art: (
      <g>
        <rect x="-31" y="-31" width="62" height="62" rx="8" fill="#e4822f" />
        <rect x="-7" y="-25" width="17" height="26" rx="2" fill="none" stroke="#fff" strokeWidth="2.400" />
        <rect x="-3" y="-13" width="9" height="6" fill="#fff" />
        <path d="M-2-13v-3q3-4 7 0v3" stroke="#fff" strokeWidth="1.600" fill="none" />
        <path d="M-14 4q-13-5-14 6 1 12 16 11" stroke="#fff" strokeWidth="1.600" fill="none" />
        <text x="2" y="16" textAnchor="middle" fontSize="13" fontWeight="700" fill="#fff">SafeNet</text>
      </g>
    ),
  },
  {
    name: "Terminal",
    running: true,
    art: (
      <g>
        <rect x="-29" y="-26" width="59" height="52" rx="3" fill="#232323" stroke="#b5bcbd" strokeWidth="1.600" />
        <rect x="-27" y="-24" width="55" height="48" fill="none" stroke="#000" strokeWidth="3" />
        <path d="m-22-17 7 4-7 4M-14-8h9" stroke="#fff" strokeWidth="2.200" fill="none" />
      </g>
    ),
  },
];

const files: App[] = [
  {
    name: "Notebook",
    art: (
      <g>
        <path d="M-21-32H3L20-12V31h-41z" fill="#f3f3f1" />
        <path d="M-22-30v60" stroke="#222" strokeWidth="4" strokeDasharray="3 1.500" />
        <path d="M-19-29H2v6h-21z" fill="#a0175c" />
        <path d="M-16-18H4M-16-13H4M-16-8H8M-16-2h32M-16 4h32M-16 10h30M-16 16h32M-16 22h28M-16 27h30" stroke="#b98f8f" strokeWidth="1.400" strokeDasharray="5 1 2 1" />
        <path d="m3-32 17 20-13-3z" fill="#d4d4d2" />
      </g>
    ),
  },
  {
    name: "Chrome window",
    art: (
      <g>
        <rect x="-33" y="-18" width="66" height="36" fill="#eef1f5" />
        <path d="M-33-14h66v2h-66z" fill="#3f97d3" />
        <rect x="-17" y="-10" width="24" height="28" fill="#fff" />
        <path d="M-14-5h17M-14 0H1M-14 5h16M-14 10H0M-14 15h14M10-6h12M10-1h12M10 4h10" stroke="#99a" strokeDasharray="3 1" />
        <g transform="translate(22 20) scale(.38)">
          <Chrome />
        </g>
      </g>
    ),
  },
  {
    name: "Trash",
    art: (
      <g>
        <path d="m-24-24 6-8 8 3 10-4 6 4 8-1 10 7-2 8h-44z" fill="#e9e9e7" />
        <path d="m-14-29 8 8 4-10 6 10 8-7M-18-22l10 4 8-4 10 4" stroke="#555" strokeWidth="1.600" fill="none" />
        <path d="M-25-24q25 10 50 0l-6 50q-1 4-6 4h-26q-5 0-6-4z" fill="url(#trash)" />
        <path d="M-25-24q25 10 50 0" stroke="#fff" strokeWidth="1.600" fill="none" />
      </g>
    ),
  },
];

function DockItem({ name, art, running }: App) {
  return (
    <button aria-label={name} className="h-[92px] w-[74px] shrink-0">
      <svg viewBox="-37 -43 74 92" width="74" height="92" className="overflow-visible" aria-hidden="true">
        {art}
        {running && <circle cx="0" cy="41" r="4" fill="#141405" />}
      </svg>
    </button>
  );
}

function Gradient({ id, stops, flat }: { id: string; stops: string[]; flat?: boolean }) {
  return (
    <linearGradient id={id} x1="0" y1="0" x2={flat ? "1" : "0"} y2={flat ? "0" : "1"}>
      {stops.map((s, i) => (
        <stop key={s + i} offset={i / (stops.length - 1)} stopColor={s} />
      ))}
    </linearGradient>
  );
}

function Meadow() {
  return (
    <svg className="absolute inset-0 h-full w-full" aria-hidden="true">
      <defs>
        <filter id="shade" x="0" y="0" width="100%" height="100%" colorInterpolationFilters="sRGB">
          <feTurbulence type="fractalNoise" baseFrequency=".045 .06" numOctaves="4" seed="8" />
          <feColorMatrix values="1.300 0 0 0 -.34  1.300 0 0 0 -.28  1 0 0 0 -.29  0 0 0 0 1" />
        </filter>
        <filter id="sun" x="0" y="0" width="100%" height="100%" colorInterpolationFilters="sRGB">
          <feTurbulence type="fractalNoise" baseFrequency=".09 .035" numOctaves="4" seed="3" />
          <feColorMatrix values="1.800 0 0 0 -.2  1.700 0 0 0 -.12  1.800 0 0 0 -.4  0 0 0 0 1" />
        </filter>
        <Gradient id="finder" stops={["#4fc3f7", "#2f73ea"]} />
        <Gradient id="steel" stops={["#cdd3d7", "#7a7f83"]} />
        <Gradient id="safari" stops={["#3f9df0", "#38b4f2", "#2a72d6"]} />
        <Gradient id="msg" stops={["#6cc0f9", "#2f7bf2"]} />
        <Gradient id="rainbow" stops={["#f0506e", "#b25cf0", "#4bb5f2"]} />
        <Gradient id="note" stops={["#ea4e83", "#7a6cf0"]} />
        <Gradient id="books" stops={["#f8b13a", "#d9541f"]} />
        <Gradient id="store" stops={["#4cc3f8", "#2a62e8"]} />
        <Gradient id="pref" stops={["#c8d3da", "#75787b"]} />
        <Gradient id="fxblue" stops={["#2b8af5", "#1a3fb4", "#2c1a6e"]} />
        <Gradient id="fxfire" stops={["#e8283e", "#f2513a", "#f99b2c", "#fdd33f"]} flat />
        <Gradient id="acro" stops={["#e33026", "#7c1510"]} />
        <Gradient id="trash" stops={["#b5b7b7", "#dedfdf", "#f1f1f1"]} />
        <linearGradient id="dusk" x1="0" y1="0" x2="0" y2="1">
          <stop offset="0" stopColor="#0a0908" stopOpacity=".85" />
          <stop offset=".6" stopColor="#1a160f" stopOpacity=".1" />
          <stop offset="1" stopColor="#1a160f" stopOpacity="0" />
        </linearGradient>
        <linearGradient id="bank" x1="0" y1="0" x2="0" y2="1">
          <stop offset="0" stopColor="#1c1a17" stopOpacity=".9" />
          <stop offset=".4" stopColor="#54412f" stopOpacity=".6" />
          <stop offset=".75" stopColor="#dfe6b8" stopOpacity=".4" />
          <stop offset="1" stopColor="#eef0d2" stopOpacity=".6" />
        </linearGradient>
      </defs>
      <rect width="50%" height="100%" filter="url(#shade)" />
      <ellipse cx="20" cy="28" rx="26" ry="24" fill="#6f63a8" opacity=".65" />
      <circle cx="136" cy="72" r="9" fill="#8f8fc4" opacity=".7" />
      <rect width="50%" height="100%" fill="url(#dusk)" />
      <rect x="50%" width="50%" height="100%" filter="url(#sun)" />
      <rect x="50%" width="50%" height="100%" fill="url(#bank)" />
    </svg>
  );
}

function Dock() {
  return (
    <footer className="relative flex h-[92px] shrink-0 justify-center">
      <Meadow />
      <nav
        aria-label="Dock"
        className={
          "relative flex rounded-t-[10px] bg-linear-to-r from-[#76805f] from-0% via-[#948c7a] via-55% to-[#a09b7e] to-100% px-[5px] " + ui
        }
      >
        {apps.map((a) => (
          <DockItem key={a.name} {...a} />
        ))}
        <div className="flex w-8 justify-center py-3">
          <div className="w-0.5 bg-[#6f6b58]" />
        </div>
        {files.map((a) => (
          <DockItem key={a.name} {...a} />
        ))}
      </nav>
    </footer>
  );
}

export default function App() {
  return (
    <div className={"flex h-screen flex-col overflow-hidden bg-black " + ui}>
      <MenuBar />
      <TabStrip />
      <NavBar />
      <BookmarksBar />
      <Page />
      <Dock />
    </div>
  );
}
